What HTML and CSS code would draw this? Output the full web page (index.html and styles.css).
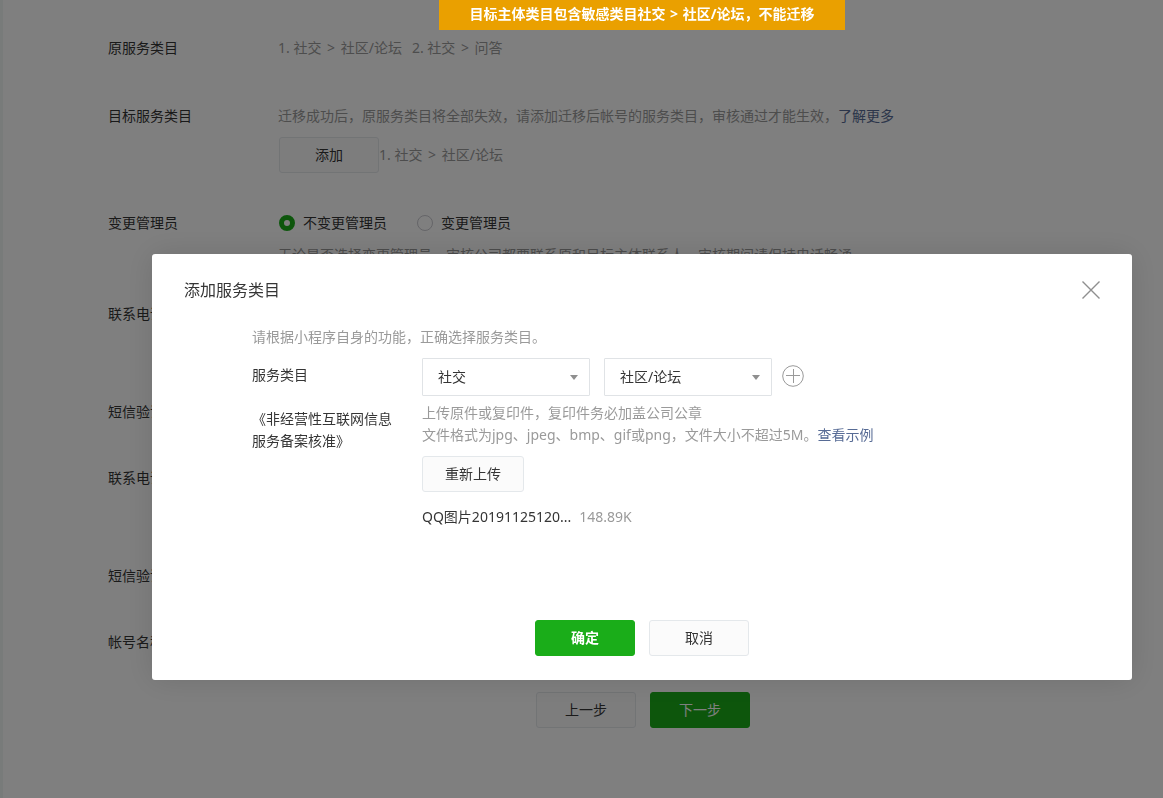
FILE: index.html
```html
<!DOCTYPE html>
<html lang="zh-CN">
<head>
<meta charset="utf-8">
<title>添加服务类目</title>
<link rel="stylesheet" href="styles.css">
</head>
<body>
<main class="page">
  <form class="form">
    <div class="row row-category">
      <span class="row-label">原服务类目</span>
      <p class="muted categories"><span>1. 社交 <span class="sep">&gt;</span> 社区/论坛</span><span>2. 社交 <span class="sep">&gt;</span> 问答</span></p>
    </div>
    <div class="row row-target">
      <span class="row-label">目标服务类目</span>
      <div class="row-body">
        <p class="muted">迁移成功后，原服务类目将全部失效，请添加迁移后帐号的服务类目，审核通过才能生效，<a class="link" href="#">了解更多</a></p>
        <div class="add-line">
          <button class="btn" type="button">添加</button>
          <span class="muted">1. 社交 <span class="sep">&gt;</span> 社区/论坛</span>
        </div>
      </div>
    </div>
    <div class="row row-admin">
      <span class="row-label">变更管理员</span>
      <div class="row-body">
        <div class="radios">
          <label class="radio"><input type="radio" name="admin" checked>不变更管理员</label>
          <label class="radio"><input type="radio" name="admin">变更管理员</label>
        </div>
        <p class="muted admin-hint">无论是否选择变更管理员，审核公司都要联系原和目标主体联系人，审核期间请保持电话畅通</p>
      </div>
    </div>
    <div class="row row-phone"><span class="row-label">联系电话</span></div>
    <div class="row row-code"><span class="row-label">短信验证码</span></div>
    <div class="row row-phone"><span class="row-label">联系电话</span></div>
    <div class="row row-code"><span class="row-label">短信验证码</span></div>
    <div class="row row-account"><span class="row-label">帐号名称</span></div>
    <div class="page-actions">
      <button class="btn" type="button">上一步</button>
      <button class="btn btn-primary" type="button">下一步</button>
    </div>
  </form>
</main>

<div class="overlay">
  <div class="toast" role="alert">目标主体类目包含敏感类目社交 <span class="sep-tight">&gt;</span> 社区/论坛，不能迁移</div>
  <section class="dialog" role="dialog" aria-labelledby="dialog-title">
    <header class="dialog-head">
      <h2 class="dialog-title" id="dialog-title">添加服务类目</h2>
      <button class="icon-btn" type="button" aria-label="关闭">
        <svg width="18" height="20" viewBox="0 0 18 20"><path d="M.5 1.5l17 17M17.5 1.5l-17 17" fill="none" stroke="#8f8f8f" stroke-width="1.4"/></svg>
      </button>
    </header>
    <div class="dialog-body">
      <p class="muted">请根据小程序自身的功能，正确选择服务类目。</p>
      <div class="field field-select">
        <label class="field-label" for="category">服务类目</label>
        <div class="selects">
          <span class="select"><select id="category"><option>社交</option></select></span>
          <span class="select"><select aria-label="二级类目"><option>社区/论坛</option></select></span>
          <button class="icon-btn icon-add" type="button" aria-label="添加类目">
            <svg width="22" height="22" viewBox="0 0 22 22" fill="none" stroke="#9a9a9a"><circle cx="11" cy="11" r="10.3" stroke-width="1"/><path d="M4 10.5h14M11.5 4v14"/></svg>
          </button>
        </div>
      </div>
      <div class="field">
        <span class="field-label field-label-file">《非经营性互联网信息服务备案核准》</span>
        <div class="upload">
          <p class="muted">上传原件或复印件，复印件务必加盖公司公章<br>文件格式为jpg、jpeg、bmp、gif或png，文件大小不超过5M。<a class="link" href="#">查看示例</a></p>
          <button class="btn btn-upload" type="button">重新上传</button>
          <p class="file"><span>QQ图片20191125120...</span><span class="muted">148.89K</span></p>
        </div>
      </div>
    </div>
    <footer class="dialog-foot">
      <button class="btn btn-primary btn-strong" type="button">确定</button>
      <button class="btn" type="button">取消</button>
    </footer>
  </section>
</div>
</body>
</html>
```

FILE: styles.css
```css
* {
  box-sizing: border-box;
}

body {
  margin: 0;
  color: #353535;
  font: 14px/22px "Noto Sans", "Noto Sans CJK SC", sans-serif;
}

p,
h2 {
  margin: 0;
}

button,
select {
  font: inherit;
  color: inherit;
}

.page {
  min-height: 100vh;
  border-left: 3px solid #f1f6f5;
  padding: 37px 30px 0 105px;
}

.row {
  display: flex;
}

.row-label {
  flex: none;
  width: 170px;
}

.row-category {
  min-height: 68px;
}

.row-target {
  min-height: 107px;
}

.row-admin {
  min-height: 91px;
}

.row-phone {
  min-height: 98px;
}

.row-code {
  min-height: 66px;
}

.row-account {
  min-height: 61px;
}

.muted {
  color: #9a9a9a;
}

.categories {
  display: flex;
  gap: 10px;
}

.sep {
  margin: 0 2px;
}

.sep-tight {
  margin: 0 1px;
}

.link {
  color: #576b95;
  text-decoration: none;
}

.btn {
  height: 36px;
  min-width: 100px;
  padding: 0 22px;
  border: 1px solid #e4e8eb;
  border-radius: 3px;
  background: #fbfbfb;
}

.btn-primary {
  border-color: #1aad19;
  background: #1aad19;
  color: #fff;
}

.btn-strong {
  font-weight: 700;
}

.add-line {
  display: flex;
  align-items: center;
  margin-top: 10px;
  padding-left: 1px;
}

.radios {
  display: flex;
  gap: 30px;
  padding-left: 1px;
}

.radio {
  display: flex;
  align-items: center;
  gap: 8px;
}

.radio input {
  appearance: none;
  width: 16px;
  height: 16px;
  margin: 0;
  border: 1px solid #c9c9d0;
  border-radius: 50%;
  background: #fff;
}

.radio input:checked {
  border: 5px solid #1aad19;
}

.admin-hint {
  margin-top: 10px;
}

.page-actions {
  display: flex;
  justify-content: center;
  gap: 14px;
  margin-left: 45px;
}

.overlay {
  position: fixed;
  inset: 0;
  display: flex;
  flex-direction: column;
  padding: 0 31px 0 152px;
  background: rgba(0, 0, 0, 0.5);
}

.toast {
  align-self: center;
  margin-bottom: 224px;
  padding: 3px 30px 5px;
  background: #eaa000;
  color: #fff;
  font-weight: 700;
}

.dialog {
  padding: 24px 32px;
  border-radius: 3px;
  background: #fff;
  box-shadow: 0 0 30px rgba(0, 0, 0, 0.12);
}

.dialog-head {
  display: flex;
  align-items: center;
  justify-content: space-between;
}

.dialog-title {
  font-size: 16px;
  line-height: 24px;
  font-weight: 400;
}

.icon-btn {
  display: flex;
  padding: 0;
  border: 0;
  background: none;
}

.dialog-body {
  padding: 24px 68px 0;
}

.field {
  display: flex;
  gap: 30px;
  margin-top: 6px;
}

.field-select {
  margin-top: 10px;
}

.field-label {
  flex: none;
  width: 140px;
}

.field-select .field-label {
  padding-top: 6px;
}

.field-label-file {
  padding-top: 6px;
}

.selects {
  display: flex;
  align-items: center;
  gap: 14px;
}

.select {
  position: relative;
}

.select select {
  display: block;
  appearance: none;
  width: 168px;
  height: 38px;
  padding: 0 15px;
  border: 1px solid #e0e3e6;
  border-radius: 1px;
  background: #fff;
}

.select::after {
  content: "";
  position: absolute;
  top: 17px;
  right: 12px;
  border: 4px solid transparent;
  border-top: 5px solid #8f8f8f;
  border-bottom: 0;
}

.icon-add {
  margin: 0 0 2px -4px;
}

.btn-upload {
  margin: 10px 0 14px;
}

.file {
  display: flex;
  gap: 8px;
}

.dialog-foot {
  display: flex;
  justify-content: center;
  gap: 14px;
  margin-top: 92px;
}
```
